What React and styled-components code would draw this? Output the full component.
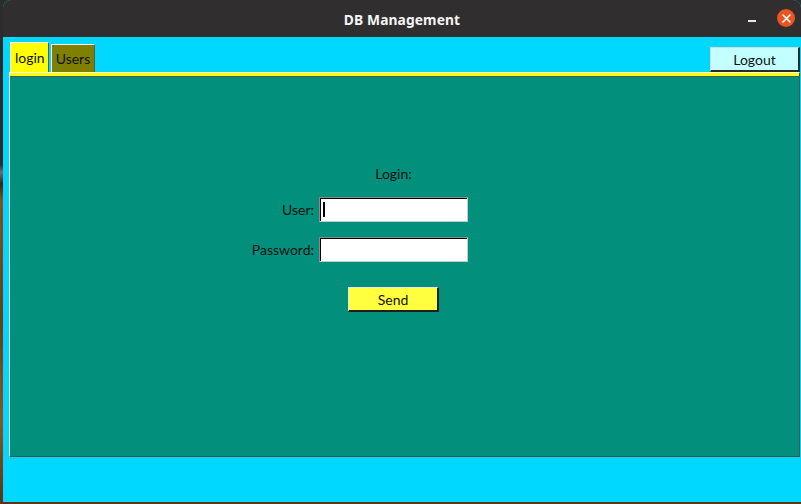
import React from "react";
import styled, { createGlobalStyle } from "styled-components";

const GlobalStyle = createGlobalStyle`
  html, body { margin: 0; padding: 0; }
  body {
    width: 801px;
    height: 504px;
    overflow: hidden;
    background: linear-gradient(180deg, #2c2c2c 0, #2c2c2c 165px, #6f6f6f 172px, #3a2412 184px, #86501f 200px, #6b3e18 320px, #8a5524 420px, #5a3616 504px);
    font-family: Lato, "Open Sans", sans-serif;
  }
`;

const Desktop = styled.div`
  width: 801px;
  height: 504px;
  padding: 0 0 2px 3px;
  box-sizing: border-box;
  display: flex;
`;

const Window = styled.div`
  flex: 1;
  display: flex;
  flex-direction: column;
  border-radius: 8px 8px 0 0;
  overflow: hidden;
  background: #00d8ff;
`;

const TitleBar = styled.div`
  height: 37px;
  flex: none;
  background: #302e2e;
  display: grid;
  grid-template-columns: 1fr auto 1fr;
  align-items: center;
`;

const Title = styled.div`
  grid-column: 2;
  color: #f4f4f4;
  font-family: "Noto Sans", sans-serif;
  font-weight: 700;
  font-size: 13.8px;
  letter-spacing: 0.1px;
  padding-top: 1px;
`;

const Controls = styled.div`
  grid-column: 3;
  justify-self: end;
  display: flex;
  align-items: center;
  gap: 21px;
  padding-right: 6px;
`;

const Minimize = styled.div`
  width: 8px;
  height: 1.5px;
  background: #e8e8e8;
  margin-top: 5px;
`;

const Close = styled.div`
  width: 18px;
  height: 18px;
  border-radius: 50%;
  background: #e95420;
  display: flex;
  align-items: center;
  justify-content: center;
  margin-top: -1px;
`;

const Body = styled.div`
  flex: 1;
  display: flex;
  flex-direction: column;
  padding: 5px 0 45px 6px;
`;

const TabRow = styled.div`
  height: 30px;
  display: flex;
  align-items: flex-end;
  padding-left: 1px;
`;

const Tab = styled.div`
  height: ${(p) => (p.$active ? 30 : 28)}px;
  margin-left: ${(p) => (p.$active ? 0 : 2)}px;
  padding: 0 ${(p) => (p.$active ? 3 : 4)}px 0 4px;
  box-sizing: border-box;
  display: flex;
  align-items: center;
  background: ${(p) => (p.$active ? "#ffff00" : "#808000")};
  border-top: 1px solid #ffffff;
  border-left: 1px solid #ffffff;
  border-right: 1px solid #5a5a5a;
  font-size: 14px;
  color: #111;
`;

const LogoutButton = styled.div`
  margin-left: auto;
  margin-right: 1px;
  width: 90px;
  height: 25px;
  box-sizing: border-box;
  display: flex;
  align-items: center;
  justify-content: center;
  background: #c4ffff;
  border-top: 1px solid #d8d8d8;
  border-left: 1px solid #d8d8d8;
  border-right: 2px solid #2a2a2a;
  border-bottom: 2px solid #2a2a2a;
  font-size: 14px;
  color: #111;
  padding-top: 1px;
`;

const Pane = styled.div`
  flex: 1;
  margin-right: 1px;
  display: flex;
  flex-direction: column;
  border-top: 1px solid #ffffff;
  border-left: 1px solid #ffffff;
  border-right: 1px solid #4d4d4d;
  border-bottom: 1px solid #4d4d4d;
  background: #ffff00;
  padding-top: 3px;
`;

const Frame = styled.div`
  flex: 1;
  background: #028f7c;
  border-top: 1px solid #4a5a55;
  padding: 88px 0 0 241px;
  color: #111;
  font-size: 14px;
`;

const Row = styled.div`
  display: flex;
  align-items: center;
  gap: 5px;
  margin-top: ${(p) => p.$mt || 0}px;
`;

const Label = styled.div`
  width: 63px;
  text-align: right;
  white-space: nowrap;
`;

const Caption = styled.div`
  margin-left: 68px;
  width: 149px;
  height: 18px;
  line-height: 18px;
  text-align: center;
`;

const Entry = styled.div`
  width: 149px;
  height: 25px;
  box-sizing: border-box;
  background: #ffffff;
  border-top: 1px solid #8a8a8a;
  border-left: 1px solid #8a8a8a;
  border-right: 1px solid #c8c8c8;
  border-bottom: 1px solid #c8c8c8;
  box-shadow: inset 1px 1px 0 #000;
  display: flex;
  align-items: center;
  padding-left: 3px;
`;

const Caret = styled.div`
  width: 2px;
  height: 15px;
  background: #000;
`;

const SendButton = styled.div`
  margin-left: 97px;
  width: 91px;
  height: 25px;
  box-sizing: border-box;
  display: flex;
  align-items: center;
  justify-content: center;
  background: #ffff40;
  border-top: 1px solid #e6e6e6;
  border-left: 1px solid #e6e6e6;
  border-right: 2px solid #1e1e1e;
  border-bottom: 2px solid #1e1e1e;
  padding-top: 1px;
`;

export default function App() {
  return (
    <>
      <GlobalStyle />
      <Desktop>
        <Window>
          <TitleBar>
            <Title>DB Management</Title>
            <Controls>
              <Minimize />
              <Close>
                <svg width="9" height="9" viewBox="0 0 9 9">
                  <path d="M1 1L8 8M8 1L1 8" stroke="#fff" strokeWidth="1.6" strokeLinecap="round" />
                </svg>
              </Close>
            </Controls>
          </TitleBar>
          <Body>
            <TabRow>
              <Tab $active>login</Tab>
              <Tab>Users</Tab>
              <LogoutButton>Logout</LogoutButton>
            </TabRow>
            <Pane>
              <Frame>
                <Row>
                  <Caption>Login:</Caption>
                </Row>
                <Row $mt={14}>
                  <Label>User:</Label>
                  <Entry>
                    <Caret />
                  </Entry>
                </Row>
                <Row $mt={15}>
                  <Label>Password:</Label>
                  <Entry />
                </Row>
                <Row $mt={25}>
                  <SendButton>Send</SendButton>
                </Row>
              </Frame>
            </Pane>
          </Body>
        </Window>
      </Desktop>
    </>
  );
}
